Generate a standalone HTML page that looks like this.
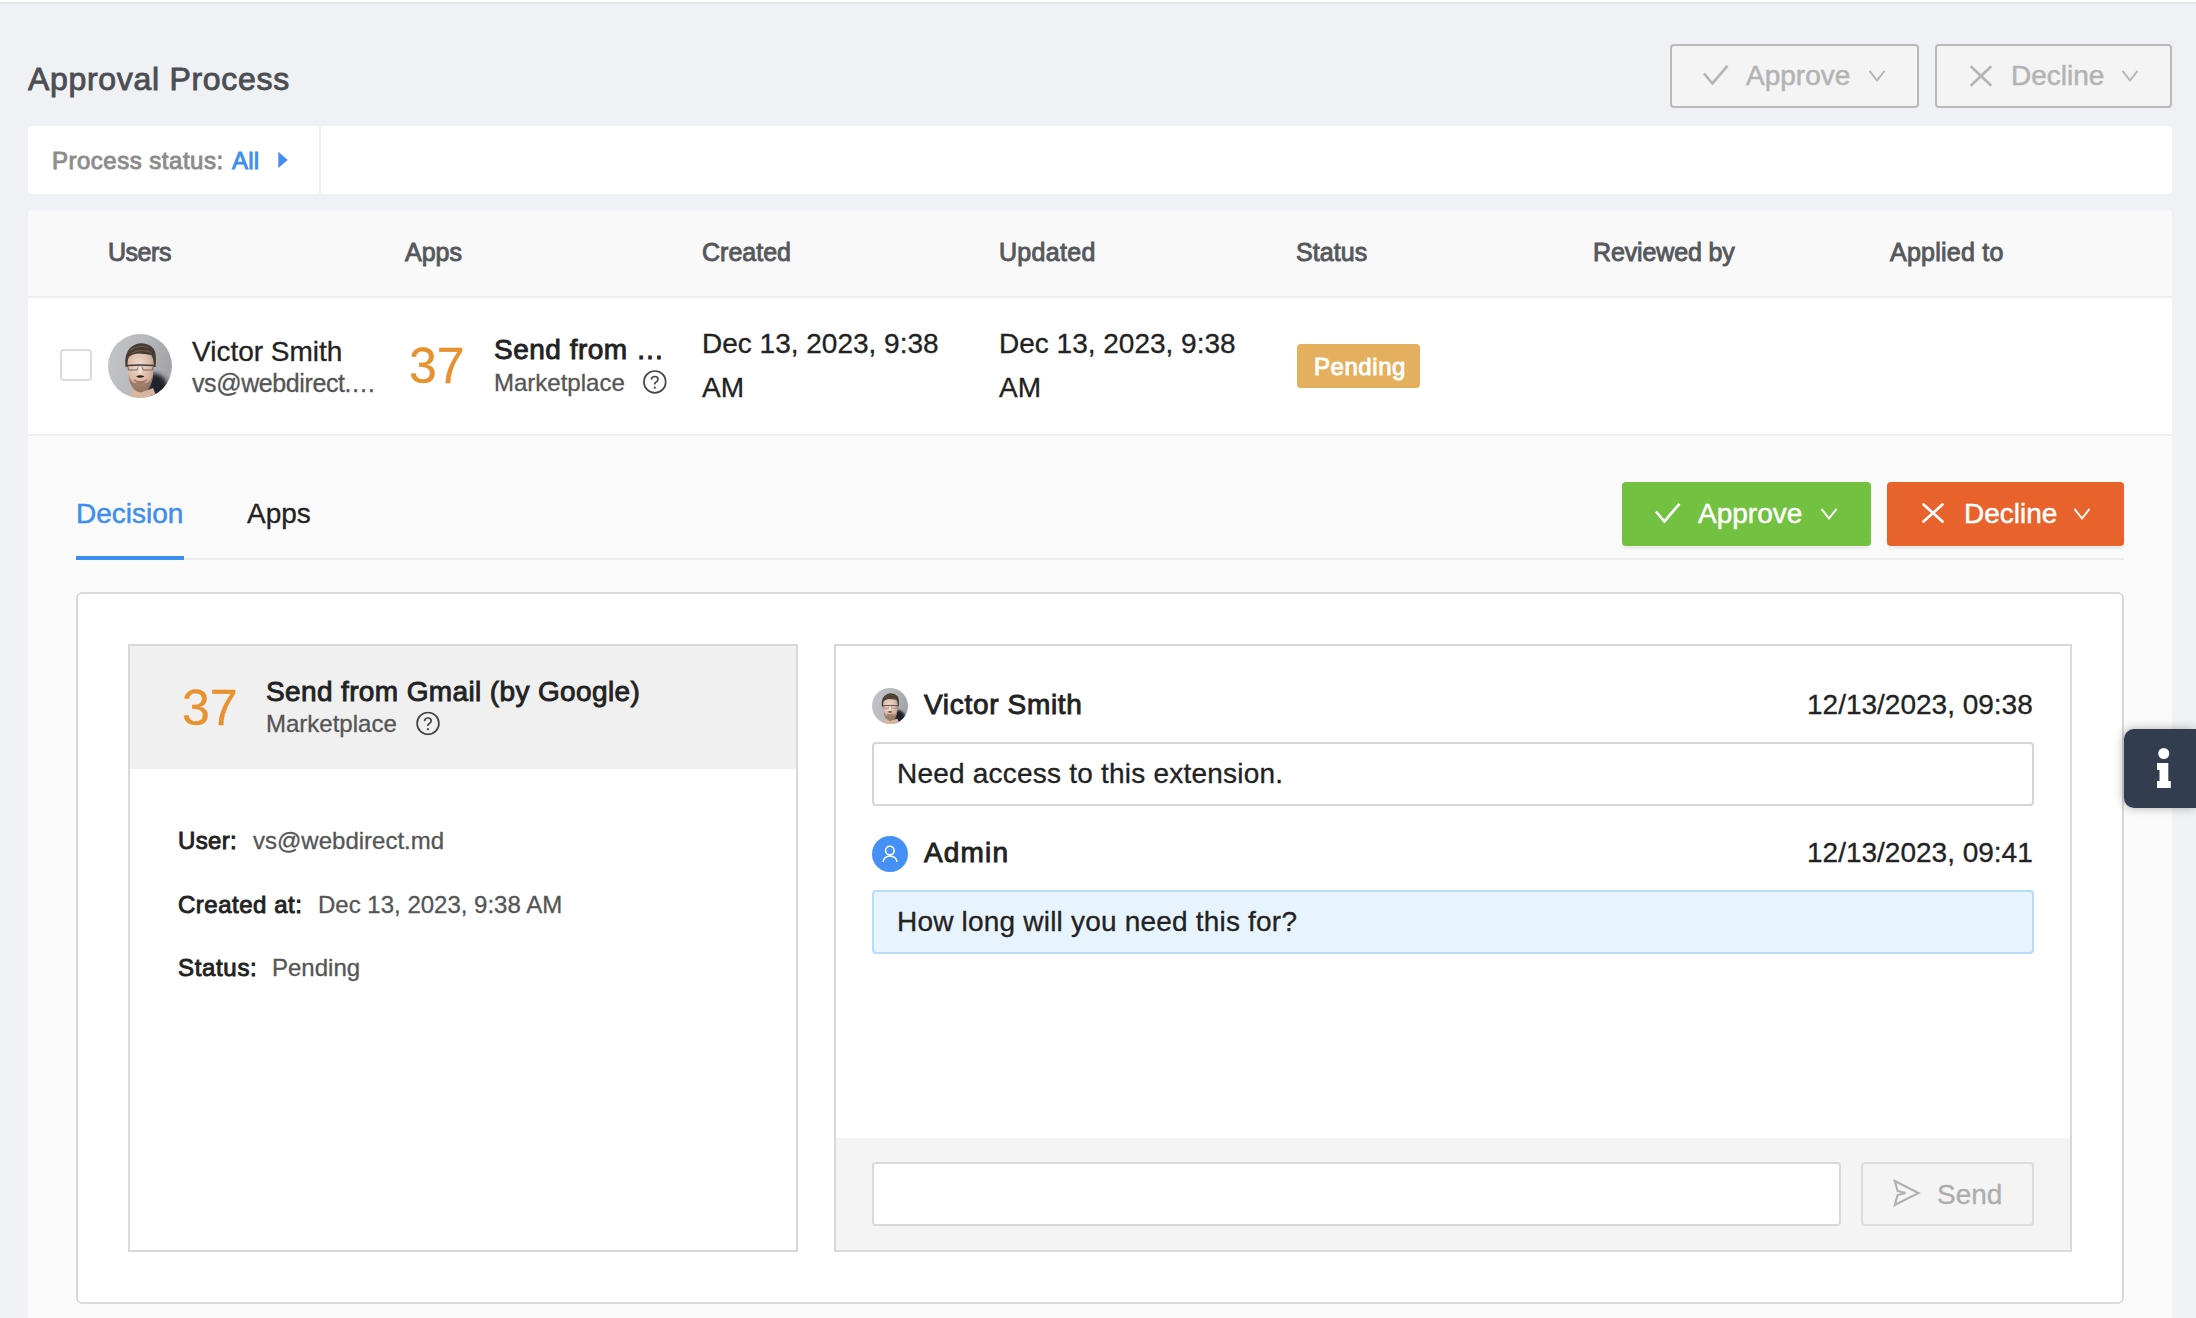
<!DOCTYPE html>
<html><head><meta charset="utf-8">
<style>
*{box-sizing:border-box;margin:0;padding:0}
html,body{width:2196px;height:1318px;overflow:hidden}
body{position:relative;background:#f0f1f5;font-family:"Liberation Sans",sans-serif;color:#222}
.a{position:absolute}
.t{position:absolute;line-height:1;white-space:nowrap;-webkit-text-stroke:0.3px currentColor}
.b{font-weight:bold}
.m{-webkit-text-stroke:0.5px currentColor}
.sb{-webkit-text-stroke:0.9px currentColor}
</style></head>
<body>
<svg width="0" height="0" style="position:absolute">
<defs>
<symbol id="av" viewBox="0 0 64 64">
<defs>
<linearGradient id="avbg" x1="0" y1="0" x2="1" y2="0.2"><stop offset="0" stop-color="#c3c4c8"/><stop offset="0.55" stop-color="#b9babe"/><stop offset="1" stop-color="#a3a5a9"/></linearGradient>
<clipPath id="avc"><circle cx="32" cy="32" r="32"/></clipPath>
<filter id="avb" x="-50%" y="-50%" width="200%" height="200%"><feGaussianBlur stdDeviation="2.2"/></filter>
<filter id="avs" x="-10%" y="-10%" width="120%" height="120%"><feGaussianBlur stdDeviation="0.5"/></filter>
<radialGradient id="avface" cx="0.45" cy="0.32" r="0.75"><stop offset="0" stop-color="#f0dbcd"/><stop offset="0.55" stop-color="#dcbba6"/><stop offset="1" stop-color="#b38c77"/></radialGradient>
</defs>
<g clip-path="url(#avc)">
<rect width="64" height="64" fill="url(#avbg)"/>
<path d="M40 40 Q52 37 58 47 L62 64 L40 64 Z" fill="#202429" filter="url(#avb)"/>
<g filter="url(#avs)">
<path d="M22 64 L23.5 55 Q33 60.5 45 54 L49 64 Z" fill="#d9b6a0"/>
<path d="M19.5 29 Q19.5 19 32 19 Q45 19 45 29 L45 41 Q44 55.5 32.5 58.5 Q21.5 55.5 20.2 41 Z" fill="url(#avface)"/>
<path d="M20.8 41 Q21.5 56 32.5 58.5 Q43.5 56 44.6 41 Q43.5 47 38.5 49 Q32.5 46.5 26.5 49 Q22 47 20.8 41 Z" fill="#7a5f4f" opacity="0.6"/>
<path d="M17.5 33 Q16 20 22 14 Q27.5 9 33.5 9.2 Q41 9.5 45.5 14.5 Q49 19.5 47.5 33 L45.6 33 Q46 24 43.2 21 Q37 19.5 30 19.5 Q23.5 20 21 23 Q19.3 26 19.5 33 Z" fill="#463a30"/>
<path d="M22 16.5 Q30 10.5 40.5 13.5 M24 19 Q33 14.5 43.5 18.5" stroke="#6b5b4d" stroke-width="1.1" fill="none"/>
<path d="M19.2 31.5 Q32 30.3 45.6 31.5" stroke="#3c3a3b" stroke-width="1.5" fill="none"/>
<path d="M19.7 32 L20.6 36 H29.2 L30.3 32.5 M34 32.5 L35 36 H44.4 L45.3 32" fill="none" stroke="#4a4849" stroke-width="0.9" opacity="0.8"/>
<path d="M30.5 33 L33.5 33 L33.6 39.5 L30.4 39.5 Z" fill="#f4e4d8" opacity="0.75"/>
<path d="M28 42.5 Q32 39.8 36.5 42.5 Q32 45 28 42.5 Z" fill="#2e211b"/>
<path d="M26 46 Q32 50 39 46" stroke="#a87268" stroke-width="1.6" fill="none"/>
</g>
</g>
</symbol>
<symbol id="qm" viewBox="-12 -12 24 24">
<circle cx="0" cy="0" r="10.9" fill="none" stroke="#444" stroke-width="1.7"/>
<path d="M-3.6 -2.4 Q-3 -5.4 0 -5.4 Q3.2 -5.4 3.2 -2.6 Q3.2 -0.6 0.8 0.5 Q-0.2 1 -0.2 2.6" fill="none" stroke="#444" stroke-width="1.7"/>
<circle cx="-0.1" cy="5.8" r="1.1" fill="#444"/>
</symbol>
<symbol id="chk" viewBox="0 0 30 24"><polyline points="1.5,9.5 10,19.5 26,1" fill="none" stroke="currentColor" stroke-width="2.7"/></symbol>
<symbol id="xx" viewBox="0 0 24 24"><path d="M3 3 L21 21 M21 3 L3 21" fill="none" stroke="currentColor" stroke-width="2.7" stroke-linecap="round"/></symbol>
<symbol id="chev" viewBox="0 0 20 14"><polyline points="2,2 10,12.5 18,2" fill="none" stroke="currentColor" stroke-width="1.9"/></symbol>
</defs></svg>
<!-- top strip -->
<div class="a" style="left:0;top:0;width:2196px;height:2px;background:#fff"></div>
<div class="a" style="left:0;top:2px;width:2196px;height:2px;background:#e1e4e8"></div>

<!-- title -->
<div class="t sb" style="left:28px;top:63px;letter-spacing:0.69px;font-size:32px;color:#4b4e52">Approval Process</div>

<!-- top disabled buttons -->
<div class="a" style="left:1670px;top:44px;width:249px;height:64px;border:2px solid #b9b9b9;border-radius:4px;background:#f4f4f4"></div>
<div class="a" style="left:1935px;top:44px;width:237px;height:64px;border:2px solid #b9b9b9;border-radius:4px;background:#f4f4f4"></div>
<div class="t m" style="left:1746px;top:62px;font-size:28px;color:#b3b3b3">Approve</div>
<div class="t m" style="left:2011px;top:62px;font-size:28px;color:#b3b3b3">Decline</div>

<!-- filter bar -->
<div class="a" style="left:28px;top:126px;width:2144px;height:68px;background:#fff;border-radius:4px"></div>
<div class="a" style="left:319px;top:126px;width:2px;height:68px;background:#eeeeef"></div>
<div class="t sb" style="left:52px;top:149px;letter-spacing:0.5px;font-size:24px;color:#8c8c8c">Process status:</div>
<div class="t sb" style="left:232px;top:149px;letter-spacing:0.2px;font-size:24px;color:#3d8ef0">All</div>

<!-- table -->
<div class="a" style="left:28px;top:210px;width:2144px;height:86px;background:#f9f9f9;border-radius:4px 4px 0 0"></div>
<div class="a" style="left:28px;top:296px;width:2144px;height:2px;background:#efefef"></div>
<div class="a" style="left:28px;top:298px;width:2144px;height:136px;background:#fff"></div>
<div class="a" style="left:28px;top:434px;width:2144px;height:2px;background:#eeeeee"></div>
<div class="a" style="left:28px;top:436px;width:2144px;height:882px;background:#fafafa"></div>

<div class="t sb" style="left:108px;top:240px;letter-spacing:-0.47px;font-size:25px;color:#55585c">Users</div>
<div class="t sb" style="left:405px;top:240px;letter-spacing:0.0px;font-size:25px;color:#55585c">Apps</div>
<div class="t sb" style="left:702px;top:240px;letter-spacing:0.0px;font-size:25px;color:#55585c">Created</div>
<div class="t sb" style="left:999px;top:240px;letter-spacing:0.32px;font-size:25px;color:#55585c">Updated</div>
<div class="t sb" style="left:1296px;top:240px;letter-spacing:0.1px;font-size:25px;color:#55585c">Status</div>
<div class="t sb" style="left:1593px;top:240px;letter-spacing:-0.14px;font-size:25px;color:#55585c">Reviewed by</div>
<div class="t sb" style="left:1890px;top:240px;letter-spacing:0.24px;font-size:25px;color:#55585c">Applied to</div>

<!-- row -->
<div class="a" style="left:60px;top:349px;width:32px;height:32px;border:2px solid #dcdcdc;border-radius:4px;background:#fff"></div>
<div class="t" style="left:192px;top:338px;font-size:28px;color:#222">Victor Smith</div>
<div class="t" style="left:192px;top:371px;font-size:25px;letter-spacing:-0.4px;color:#555">vs@webdirect.&hellip;</div>
<div class="t" style="left:409px;top:341px;font-size:50px;color:#e8912f">37</div>
<div class="t sb" style="left:494px;top:336px;letter-spacing:0.5px;font-size:28px;color:#222">Send from &hellip;</div>
<div class="t" style="left:494px;top:371px;font-size:24px;color:#555">Marketplace</div>
<div class="t" style="left:702px;top:330px;font-size:28px;color:#222">Dec 13, 2023, 9:38</div>
<div class="t" style="left:702px;top:374px;font-size:28px;color:#222">AM</div>
<div class="t" style="left:999px;top:330px;font-size:28px;color:#222">Dec 13, 2023, 9:38</div>
<div class="t" style="left:999px;top:374px;font-size:28px;color:#222">AM</div>
<div class="a" style="left:1297px;top:344px;width:123px;height:44px;background:#e5b05d;border-radius:4px"></div>
<div class="t sb" style="left:1314px;top:355px;letter-spacing:0.55px;font-size:24px;color:#fff">Pending</div>

<!-- tabs -->
<div class="t m" style="left:76px;top:500px;font-size:28px;color:#3d8ef0">Decision</div>
<div class="t" style="left:247px;top:500px;font-size:28px;color:#222">Apps</div>
<div class="a" style="left:76px;top:558px;width:2048px;height:2px;background:#ebebeb"></div>
<div class="a" style="left:76px;top:556px;width:108px;height:4px;background:#3d8ef0"></div>

<!-- action buttons -->
<div class="a" style="left:1622px;top:482px;width:249px;height:64px;background:#73c140;border-radius:4px;box-shadow:0 3px 2px rgba(0,0,0,.06)"></div>
<div class="a" style="left:1887px;top:482px;width:237px;height:64px;background:#e8622b;border-radius:4px;box-shadow:0 3px 2px rgba(0,0,0,.06)"></div>
<div class="t m" style="left:1698px;top:500px;font-size:28px;color:#fff">Approve</div>
<div class="t m" style="left:1964px;top:500px;font-size:28px;color:#fff">Decline</div>

<!-- card -->
<div class="a" style="left:76px;top:592px;width:2048px;height:712px;background:#fff;border:2px solid #d9d9d9;border-radius:6px"></div>

<!-- left panel -->
<div class="a" style="left:128px;top:644px;width:670px;height:608px;border:2px solid #d9d9d9;background:#fff"></div>
<div class="a" style="left:130px;top:646px;width:666px;height:123px;background:#f0f0f0"></div>
<div class="t" style="left:182px;top:683px;font-size:50px;color:#e8912f">37</div>
<div class="t sb" style="left:266px;top:678px;letter-spacing:0.37px;font-size:28px;color:#222">Send from Gmail (by Google)</div>
<div class="t" style="left:266px;top:712px;font-size:24px;color:#555">Marketplace</div>
<div class="t sb" style="left:178px;top:829px;letter-spacing:0.35px;font-size:24px;color:#222">User:</div>
<div class="t" style="left:253px;top:829px;font-size:24px;color:#555">vs@webdirect.md</div>
<div class="t sb" style="left:178px;top:893px;letter-spacing:0.51px;font-size:24px;color:#222">Created at:</div>
<div class="t" style="left:318px;top:893px;font-size:24px;color:#555">Dec 13, 2023, 9:38 AM</div>
<div class="t sb" style="left:178px;top:956px;letter-spacing:0.67px;font-size:24px;color:#222">Status:</div>
<div class="t" style="left:272px;top:956px;font-size:24px;color:#555">Pending</div>

<!-- right panel -->
<div class="a" style="left:834px;top:644px;width:1238px;height:608px;border:2px solid #d9d9d9;background:#fff"></div>
<div class="a" style="left:836px;top:1138px;width:1234px;height:112px;background:#f4f4f4"></div>
<div class="t sb" style="left:924px;top:691px;letter-spacing:0.68px;font-size:28px;color:#222">Victor Smith</div>
<div class="t" style="left:1807px;top:691px;font-size:28px;color:#222">12/13/2023, 09:38</div>
<div class="a" style="left:872px;top:742px;width:1162px;height:64px;border:2px solid #d5d5d5;border-radius:4px;background:#fff"></div>
<div class="t" style="left:897px;top:760px;font-size:28px;letter-spacing:0.22px;color:#222">Need access to this extension.</div>
<div class="t sb" style="left:924px;top:839px;letter-spacing:1.18px;font-size:28px;color:#222">Admin</div>
<div class="t" style="left:1807px;top:839px;font-size:28px;color:#222">12/13/2023, 09:41</div>
<div class="a" style="left:872px;top:890px;width:1162px;height:64px;border:2px solid #b8dcf5;border-radius:4px;background:#e8f4fd"></div>
<div class="t" style="left:897px;top:908px;font-size:28px;letter-spacing:0.2px;color:#222">How long will you need this for?</div>
<div class="a" style="left:872px;top:1162px;width:969px;height:64px;border:2px solid #d9d9d9;border-radius:4px;background:#fff"></div>
<div class="a" style="left:1861px;top:1162px;width:173px;height:64px;border:2px solid #dcdcdc;border-radius:4px;background:#f4f4f4"></div>
<div class="t" style="left:1937px;top:1181px;font-size:28px;color:#adadad;-webkit-text-stroke:0.3px #adadad">Send</div>

<!-- info tab -->
<div class="a" style="left:2124px;top:729px;width:72px;height:79px;background:#323e50;border-radius:10px 0 0 10px;box-shadow:-1px 0 10px rgba(0,0,0,.3)"></div>

<!-- icon overlay -->
<svg class="a" style="left:0;top:0" width="2196" height="1318" viewBox="0 0 2196 1318">
<g fill="none" stroke-width="2.7" stroke="#b5b5b5">
<polyline points="1704,73.5 1712.4,83.5 1727.5,65.8"/>
<path d="M1971.5 67 L1990.5 85 M1990.5 67 L1971.5 85" stroke-linecap="round"/>
</g>
<g fill="none" stroke-width="1.9" stroke="#b5b5b5">
<polyline points="1869.5,70.8 1877,80.5 1884.5,70.8"/>
<polyline points="2122.5,70.8 2130,80.5 2137.5,70.8"/>
</g>
<g fill="none" stroke-width="2.7" stroke="#fff">
<polyline points="1656,511.5 1664.4,521.5 1679.5,503.8"/>
<path d="M1923.5 504.5 L1942.5 521.5 M1942.5 504.5 L1923.5 521.5" stroke-linecap="round"/>
</g>
<g fill="none" stroke-width="1.9" stroke="#fff">
<polyline points="1821.5,508.8 1829,518.5 1836.5,508.8"/>
<polyline points="2074.5,508.8 2082,518.5 2089.5,508.8"/>
</g>
<polygon points="278.3,151.7 287.7,159.9 278.3,168.1" fill="#448cf5"/>
<use href="#qm" x="642.85" y="369.9" width="24" height="24"/>
<use href="#qm" x="416" y="711.4" width="24" height="24"/>
<use href="#av" x="108" y="334" width="64" height="64"/>
<use href="#av" x="872" y="688" width="36" height="36"/>
<circle cx="890" cy="854" r="18" fill="#4490f5"/>
<circle cx="889.85" cy="850.6" r="4.3" fill="none" stroke="#fff" stroke-width="1.6"/>
<path d="M883 862 A7 6 0 0 1 897 862" fill="none" stroke="#fff" stroke-width="1.6"/>
<polygon points="1894.8,1181 1918.5,1193 1894.8,1205 1897.6,1195 1905.5,1193 1897.6,1191" fill="none" stroke="#b0b0b0" stroke-width="2.1" stroke-linejoin="miter"/>
<circle cx="2163.75" cy="753.5" r="5.5" fill="#fff"/>
<path d="M2157 763 H2168.3 V781 H2170.8 V788 H2157 V781 H2159.5 V770 H2157 Z" fill="#fff"/>
</svg>
</body></html>
